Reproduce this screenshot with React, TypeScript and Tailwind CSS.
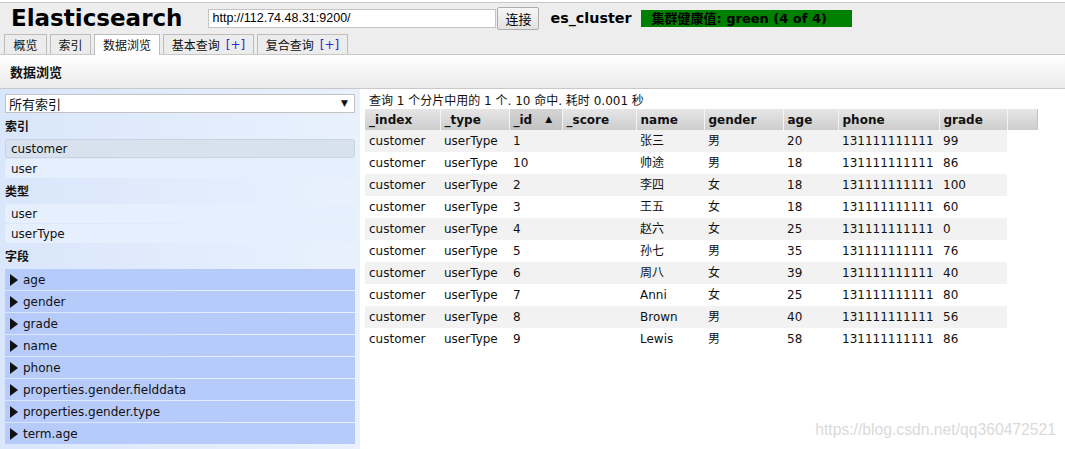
import React from 'react';

const rows: string[][] = [
  ['customer', 'userType', '1', '', '张三', '男', '20', '131111111111', '99'],
  ['customer', 'userType', '10', '', '帅途', '男', '18', '131111111111', '86'],
  ['customer', 'userType', '2', '', '李四', '女', '18', '131111111111', '100'],
  ['customer', 'userType', '3', '', '王五', '女', '18', '131111111111', '60'],
  ['customer', 'userType', '4', '', '赵六', '女', '25', '131111111111', '0'],
  ['customer', 'userType', '5', '', '孙七', '男', '35', '131111111111', '76'],
  ['customer', 'userType', '6', '', '周八', '女', '39', '131111111111', '40'],
  ['customer', 'userType', '7', '', 'Anni', '女', '25', '131111111111', '80'],
  ['customer', 'userType', '8', '', 'Brown', '男', '40', '131111111111', '56'],
  ['customer', 'userType', '9', '', 'Lewis', '男', '58', '131111111111', '86'],
];

const columns = ['_index', '_type', '_id', '_score', 'name', 'gender', 'age', 'phone', 'grade'];
const widths = [75, 69, 53, 74, 68, 79, 55, 101, 68];

const fields = ['age', 'gender', 'grade', 'name', 'phone', 'properties.gender.fielddata', 'properties.gender.type', 'term.age'];

const tabs = [
  { label: '概览', w: 'w-[43px]' },
  { label: '索引', w: 'w-[41px]' },
  { label: '数据浏览', w: 'w-[66px]', active: true },
  { label: '基本查询', w: 'w-[91px]', plus: true },
  { label: '复合查询', w: 'w-[91px]', plus: true },
];

function Triangle() {
  return (
    <svg width="8" height="12" viewBox="0 0 8 12" className="shrink-0">
      <path d="M0 0 L8 6 L0 12 Z" fill="#111" />
    </svg>
  );
}

export default function App() {
  return (
    <div className="relative w-[1065px] h-[449px] overflow-hidden bg-white text-[12px] text-[#111] font-['DejaVu_Sans','Noto_Sans_CJK_SC',sans-serif]">
      {/* Header */}
      <div className="mt-[2px] h-[53px] bg-[#ededed] border-y border-[#c8c8c8] flex flex-col">
        <div className="h-[31px] flex items-center">
          <h1 className="ml-[11px] text-[23px] font-bold leading-none text-black">Elasticsearch</h1>
          <div className="ml-[26px] w-[288px] h-[19px] bg-white border border-[#c4c4c4] flex items-center pl-[3px] text-[12.5px] font-['Liberation_Sans',sans-serif] text-black">
            http://112.74.48.31:9200/
          </div>
          <button className="ml-[1px] w-[42px] h-[23px] border border-[#adadad] rounded-[2px] bg-gradient-to-b from-[#f6f6f6] to-[#e2e2e2] text-[13px] leading-none font-['Noto_Sans_CJK_SC',sans-serif] text-black">
            连接
          </button>
          <span className="ml-[11px] text-[14.3px] font-bold text-black">es_cluster</span>
          <div className="ml-[10px] w-[211px] h-[17px] bg-[#008000] flex items-center pl-[10px] text-[13px] font-bold leading-none text-black whitespace-nowrap">
            集群健康值: green (4 of 4)
          </div>
        </div>
        <div className="h-[20px] flex items-end gap-[3px] pl-[4px]">
          {tabs.map((t) => (
            <div
              key={t.label}
              className={`${t.w} h-[20px] border border-b-0 border-[#bdbdbd] flex items-center justify-center text-[12px] leading-none font-['Noto_Sans_CJK_SC',sans-serif] whitespace-nowrap ${
                t.active ? 'bg-white h-[21px] -mb-[1px]' : 'bg-[#ececec]'
              }`}
            >
              {t.label}
              {t.plus && <span className="ml-[6px] text-[#2b2bd8] font-['DejaVu_Sans',sans-serif]">[+]</span>}
            </div>
          ))}
        </div>
      </div>

      {/* Section heading */}
      <div className="h-[34px] bg-gradient-to-b from-white to-[#ebebeb] border-b border-[#c8c8c8] flex items-center pl-[10px]">
        <span className="text-[13px] font-bold font-['Noto_Sans_CJK_SC',sans-serif]">数据浏览</span>
      </div>

      <div className="flex h-[360px]">
        {/* Left panel */}
        <div className="w-[360px] h-full bg-gradient-to-r from-[#d9e6fb] to-[#e9f1fd] px-[5px] pt-[5px]">
          <div className="h-[19px] bg-white border border-[#c2c2c2] flex items-center justify-between pl-[3px] pr-[6px]">
            <span className="text-[13px] leading-none font-['Noto_Sans_CJK_SC',sans-serif]">所有索引</span>
            <span className="text-[9px] leading-none">▼</span>
          </div>
          <div className="h-[26px] flex items-center text-[12px] font-bold font-['Noto_Sans_CJK_SC',sans-serif]">索引</div>
          <div className="flex flex-col gap-[1px]">
            <div className="h-[19px] rounded-[3px] bg-[#d8e2ee] border border-[#c9d3df] flex items-center pl-[5px]">customer</div>
            <div className="h-[19px] rounded-[3px] bg-[#e6effd] flex items-center pl-[6px]">user</div>
          </div>
          <div className="h-[26px] flex items-center text-[12px] font-bold font-['Noto_Sans_CJK_SC',sans-serif]">类型</div>
          <div className="flex flex-col gap-[1px]">
            <div className="h-[19px] rounded-[3px] bg-[#e6effd] flex items-center pl-[6px]">user</div>
            <div className="h-[19px] rounded-[3px] bg-[#e6effd] flex items-center pl-[6px]">userType</div>
          </div>
          <div className="h-[26px] flex items-center text-[12px] font-bold font-['Noto_Sans_CJK_SC',sans-serif]">字段</div>
          <div className="flex flex-col gap-[1px]">
            {fields.map((f) => (
              <div key={f} className="h-[21px] bg-[#b7cbfb] flex items-center gap-[5px] pl-[5px]">
                <Triangle />
                <span>{f}</span>
              </div>
            ))}
          </div>
        </div>

        {/* Right panel */}
        <div className="flex-1 h-full pt-[4px]">
          <div className="h-[16px] pl-[9px] flex items-center whitespace-nowrap leading-none">
            查询 1 个分片中用的 1 个. 10 命中. 耗时 0.001 秒
          </div>
          <table className="ml-[5px] border-collapse table-fixed">
            <colgroup>
              {widths.map((w, i) => (
                <col key={i} style={{ width: w }} />
              ))}
              <col style={{ width: 30 }} />
            </colgroup>
            <thead>
              <tr className="h-[21px]">
                {columns.map((c) => (
                  <th
                    key={c}
                    className={`p-0 pl-[4px] text-left font-bold text-[12px] leading-none border-r border-[#f4f4f4] ${
                      c === '_id' ? 'bg-gradient-to-b from-[#d4d4d4] to-[#c2c2c2]' : 'bg-gradient-to-b from-[#e6e6e6] to-[#cdcdcd]'
                    }`}
                  >
                    {c === '_id' ? (
                      <span className="flex items-center">
                        _id<span className="ml-[13px] text-[9px]">▲</span>
                      </span>
                    ) : (
                      c
                    )}
                  </th>
                ))}
                <th className="p-0 bg-gradient-to-b from-[#e6e6e6] to-[#cdcdcd] border-r border-[#c4c4c4]" />
              </tr>
            </thead>
            <tbody>
              {rows.map((r, i) => (
                <tr key={i} className="h-[22px]">
                  {r.map((v, j) => (
                    <td
                      key={j}
                      className={`p-0 pl-[4px] leading-none whitespace-nowrap ${i % 2 === 0 ? 'bg-[#f2f2f2]' : 'bg-white'}`}
                    >
                      {v}
                    </td>
                  ))}
                  <td className="p-0" />
                </tr>
              ))}
            </tbody>
          </table>
        </div>
      </div>

      <div className="absolute right-[9px] bottom-[11px] text-[15.7px] leading-none text-[#dadada] font-['Liberation_Sans',sans-serif]">
        https://blog.csdn.net/qq360472521
      </div>
    </div>
  );
}
